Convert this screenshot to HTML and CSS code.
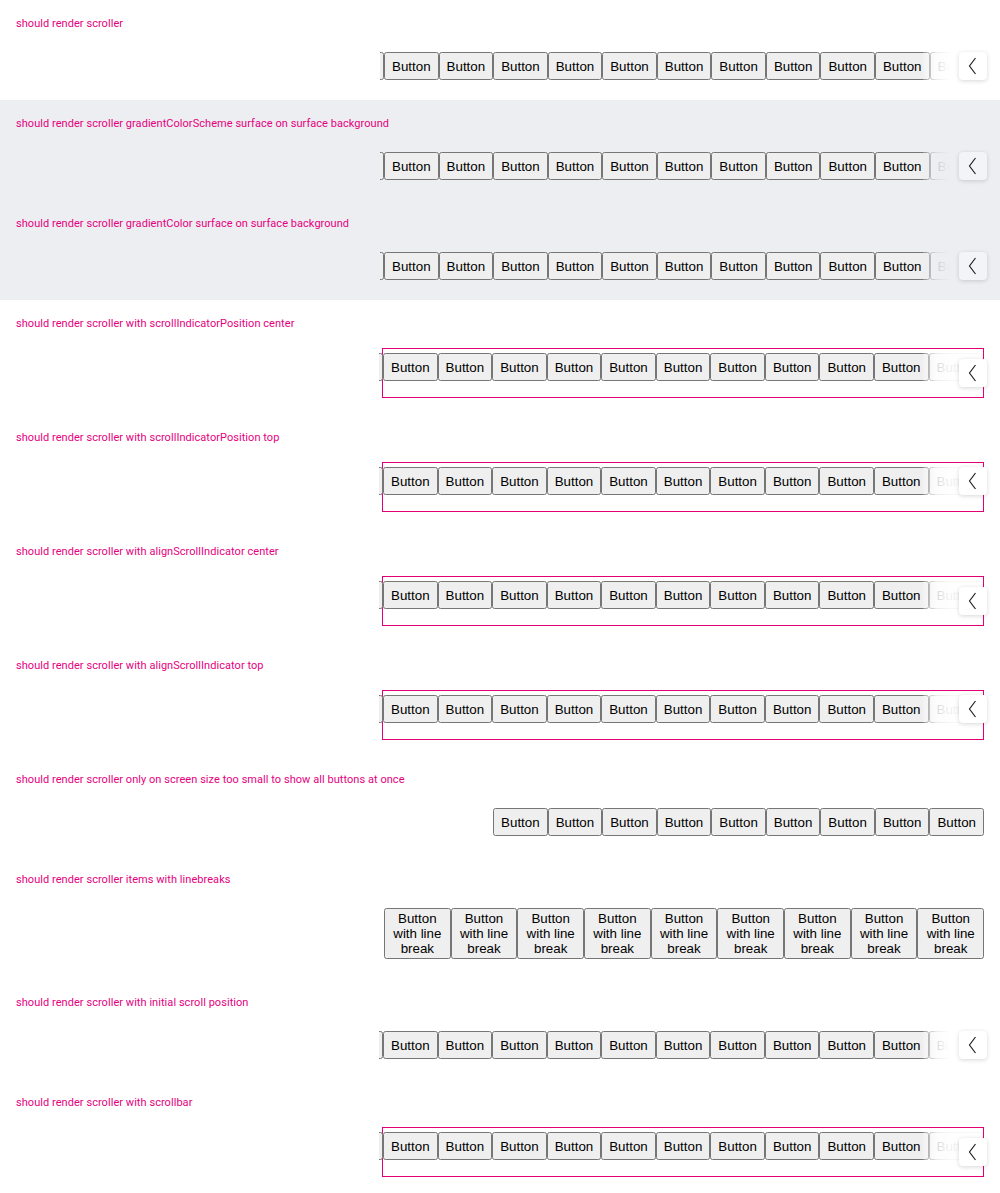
FILE: index.html
```html
<!DOCTYPE html>
<html>
<head>
<meta charset="utf-8">
<link rel="stylesheet" href="styles.css">
</head>
<body>
<section class="sec">
  <div class="label">should render scroller</div>
  <div class="scroller">
    <div class="viewport"><div class="track">
      <button class="lead">Button</button><button>Button</button><button>Button</button><button>Button</button><button>Button</button><button>Button</button><button>Button</button><button>Button</button><button>Button</button><button>Button</button><button>Button</button><button>Button</button><button>Button</button><button>Button</button>
    </div></div>
    <div class="fade"></div>
    <div class="nav nav-top"><svg width="28" height="28" viewBox="0 0 28 28"><path d="M16.5 6 L10.5 14 L16.5 22" fill="none" stroke="#222" stroke-width="1.2"/></svg></div>
  </div>
</section>

<section class="sec surface">
  <div class="label">should render scroller gradientColorScheme surface on surface background</div>
  <div class="scroller">
    <div class="viewport"><div class="track">
      <button class="lead">Button</button><button>Button</button><button>Button</button><button>Button</button><button>Button</button><button>Button</button><button>Button</button><button>Button</button><button>Button</button><button>Button</button><button>Button</button><button>Button</button><button>Button</button><button>Button</button>
    </div></div>
    <div class="fade"></div>
    <div class="nav nav-top"><svg width="28" height="28" viewBox="0 0 28 28"><path d="M16.5 6 L10.5 14 L16.5 22" fill="none" stroke="#222" stroke-width="1.2"/></svg></div>
  </div>
</section>

<section class="sec surface">
  <div class="label">should render scroller gradientColor surface on surface background</div>
  <div class="scroller">
    <div class="viewport"><div class="track">
      <button class="lead">Button</button><button>Button</button><button>Button</button><button>Button</button><button>Button</button><button>Button</button><button>Button</button><button>Button</button><button>Button</button><button>Button</button><button>Button</button><button>Button</button><button>Button</button><button>Button</button>
    </div></div>
    <div class="fade"></div>
    <div class="nav nav-top"><svg width="28" height="28" viewBox="0 0 28 28"><path d="M16.5 6 L10.5 14 L16.5 22" fill="none" stroke="#222" stroke-width="1.2"/></svg></div>
  </div>
</section>

<section class="sec boxed">
  <div class="label">should render scroller with scrollIndicatorPosition center</div>
  <div class="scroller framed">
    <div class="viewport"><div class="track">
      <button class="lead">Button</button><button>Button</button><button>Button</button><button>Button</button><button>Button</button><button>Button</button><button>Button</button><button>Button</button><button>Button</button><button>Button</button><button>Button</button><button>Button</button><button>Button</button><button>Button</button>
    </div></div>
    <div class="fade"></div>
    <div class="nav nav-center"><svg width="28" height="28" viewBox="0 0 28 28"><path d="M16.5 6 L10.5 14 L16.5 22" fill="none" stroke="#222" stroke-width="1.2"/></svg></div>
  </div>
</section>

<section class="sec boxed">
  <div class="label">should render scroller with scrollIndicatorPosition top</div>
  <div class="scroller framed">
    <div class="viewport"><div class="track">
      <button class="lead">Button</button><button>Button</button><button>Button</button><button>Button</button><button>Button</button><button>Button</button><button>Button</button><button>Button</button><button>Button</button><button>Button</button><button>Button</button><button>Button</button><button>Button</button><button>Button</button>
    </div></div>
    <div class="fade"></div>
    <div class="nav nav-items"><svg width="28" height="28" viewBox="0 0 28 28"><path d="M16.5 6 L10.5 14 L16.5 22" fill="none" stroke="#222" stroke-width="1.2"/></svg></div>
  </div>
</section>

<section class="sec boxed">
  <div class="label">should render scroller with alignScrollIndicator center</div>
  <div class="scroller framed">
    <div class="viewport"><div class="track">
      <button class="lead">Button</button><button>Button</button><button>Button</button><button>Button</button><button>Button</button><button>Button</button><button>Button</button><button>Button</button><button>Button</button><button>Button</button><button>Button</button><button>Button</button><button>Button</button><button>Button</button>
    </div></div>
    <div class="fade"></div>
    <div class="nav nav-center"><svg width="28" height="28" viewBox="0 0 28 28"><path d="M16.5 6 L10.5 14 L16.5 22" fill="none" stroke="#222" stroke-width="1.2"/></svg></div>
  </div>
</section>

<section class="sec boxed">
  <div class="label">should render scroller with alignScrollIndicator top</div>
  <div class="scroller framed">
    <div class="viewport"><div class="track">
      <button class="lead">Button</button><button>Button</button><button>Button</button><button>Button</button><button>Button</button><button>Button</button><button>Button</button><button>Button</button><button>Button</button><button>Button</button><button>Button</button><button>Button</button><button>Button</button><button>Button</button>
    </div></div>
    <div class="fade"></div>
    <div class="nav nav-items"><svg width="28" height="28" viewBox="0 0 28 28"><path d="M16.5 6 L10.5 14 L16.5 22" fill="none" stroke="#222" stroke-width="1.2"/></svg></div>
  </div>
</section>

<section class="sec">
  <div class="label">should render scroller only on screen size too small to show all buttons at once</div>
  <div class="plain-row">
    <button>Button</button><button>Button</button><button>Button</button><button>Button</button><button>Button</button><button>Button</button><button>Button</button><button>Button</button><button>Button</button>
  </div>
</section>

<section class="sec">
  <div class="label">should render scroller items with linebreaks</div>
  <div class="wrap-row">
    <button>Button with line break</button><button>Button with line break</button><button>Button with line break</button><button>Button with line break</button><button>Button with line break</button><button>Button with line break</button><button>Button with line break</button><button>Button with line break</button><button>Button with line break</button>
  </div>
</section>

<section class="sec">
  <div class="label">should render scroller with initial scroll position</div>
  <div class="scroller initial">
    <div class="viewport"><div class="track">
      <button class="lead">Button</button><button>Button</button><button>Button</button><button>Button</button><button>Button</button><button>Button</button><button>Button</button><button>Button</button><button>Button</button><button>Button</button><button>Button</button><button>Button</button><button>Button</button><button>Button</button>
    </div></div>
    <div class="fade"></div>
    <div class="nav nav-top"><svg width="28" height="28" viewBox="0 0 28 28"><path d="M16.5 6 L10.5 14 L16.5 22" fill="none" stroke="#222" stroke-width="1.2"/></svg></div>
  </div>
</section>

<section class="sec boxed">
  <div class="label">should render scroller with scrollbar</div>
  <div class="scroller framed">
    <div class="viewport"><div class="track">
      <button class="lead">Button</button><button>Button</button><button>Button</button><button>Button</button><button>Button</button><button>Button</button><button>Button</button><button>Button</button><button>Button</button><button>Button</button><button>Button</button><button>Button</button><button>Button</button><button>Button</button>
    </div></div>
    <div class="fade"></div>
    <div class="nav nav-center"><svg width="28" height="28" viewBox="0 0 28 28"><path d="M16.5 6 L10.5 14 L16.5 22" fill="none" stroke="#222" stroke-width="1.2"/></svg></div>
  </div>
</section>
</body>
</html>
```

FILE: styles.css
```css
html, body {
  margin: 0;
  padding: 0;
  background: #fff;
}

body {
  font-family: "Liberation Sans", Arial, sans-serif;
}

.sec {
  --bg: #ffffff;
  background: var(--bg);
  padding: 16px 16px 20px;
}

.sec.surface {
  --bg: #edeef2;
}

.sec.boxed {
  padding-bottom: 16px;
}

.label {
  font-family: Roboto, "Liberation Sans", sans-serif;
  font-size: 11px;
  letter-spacing: 0.05px;
  line-height: 16px;
  height: 16px;
  color: #e6007e;
  margin-bottom: 20px;
  white-space: nowrap;
}

.boxed .label {
  margin-bottom: 16px;
}

button {
  font-family: "Liberation Sans", Arial, sans-serif;
  font-size: 13.3333px;
  margin: 0;
  color: #000;
  flex: 0 0 auto;
}

/* scroller */
.scroller {
  position: relative;
  margin-left: auto;
  width: 599px;
  border: 1px solid transparent;
  border-top: 0;
  border-bottom: 0;
  padding-left: 2px;
}

.scroller.initial {
  width: 600px;
  padding-left: 1px;
}

.scroller.framed {
  border: 1px solid #e20074;
  padding: 4px 0 16px;
  width: 600px;
}

.viewport {
  overflow: hidden;
  margin-left: -4px;
}

.track {
  display: flex;
}

.track button {
  height: 28px;
}

.track .lead {
  margin-left: -50.5px;
}

.fade {
  position: absolute;
  top: 0;
  bottom: 0;
  right: 0;
  width: 60px;
  background: linear-gradient(90deg, rgba(255, 255, 255, 0.2) 0%, rgba(255, 255, 255, 0.85) 22%, var(--bg) 45%);
}

.surface .fade {
  background: linear-gradient(90deg, rgba(237, 238, 242, 0.2) 0%, rgba(237, 238, 242, 0.85) 22%, var(--bg) 45%);
}

.framed .fade {
  top: 4px;
  bottom: 16px;
  background: linear-gradient(90deg, rgba(255, 255, 255, 0.2) 0%, rgba(255, 255, 255, 0.85) 22%, rgba(255, 255, 255, 0.94) 45%);
}

.nav {
  position: absolute;
  right: -4px;
  width: 28px;
  height: 28px;
  background: #fff;
  border-radius: 4px;
  box-shadow: 0 1px 4px rgba(0, 0, 0, 0.16);
}

.surface .nav {
  background: #f3f4f7;
}

.nav svg {
  display: block;
}

.nav-top {
  top: 0;
}

.nav-items {
  top: 4px;
}

.nav-center {
  top: 10px;
}

/* non-scrolling rows */
.plain-row {
  display: flex;
  justify-content: flex-end;
}

.plain-row button {
  height: 28px;
}

.wrap-row {
  display: flex;
  width: 600px;
  margin-left: auto;
}

.wrap-row button {
  flex: 1 1 0;
  min-width: 0;
  white-space: normal;
  line-height: 15px;
}
```
